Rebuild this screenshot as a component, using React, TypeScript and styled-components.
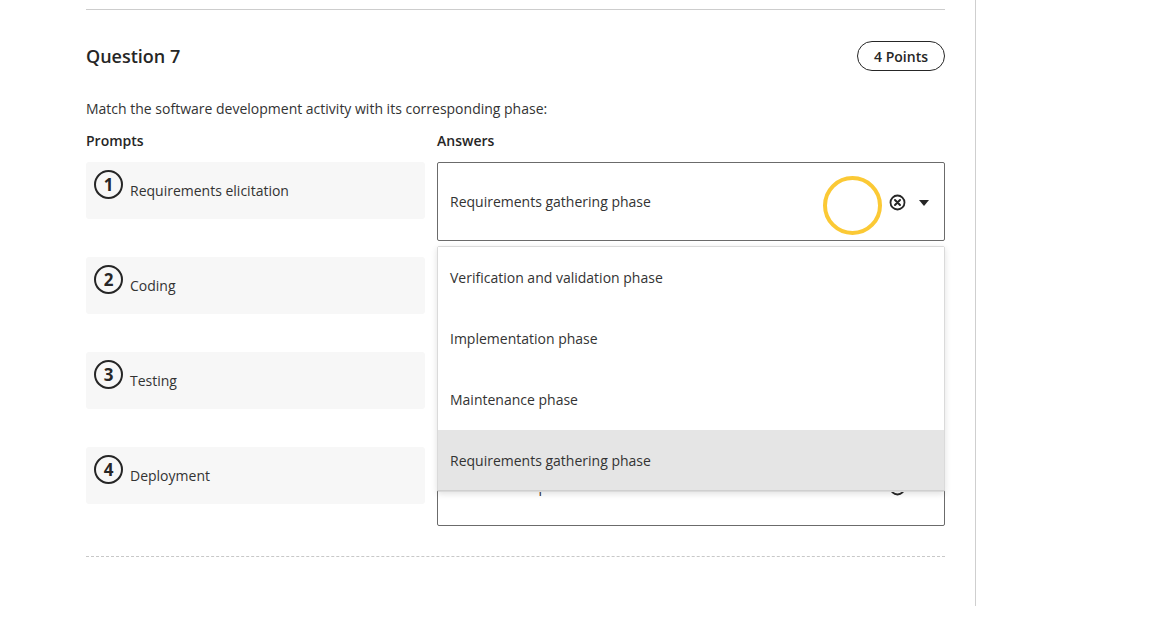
import React from "react";
import styled, { createGlobalStyle } from "styled-components";

const Global = createGlobalStyle`
  html, body { margin: 0; padding: 0; background: #fff; }
  body { font-family: "Open Sans", "Liberation Sans", sans-serif; color: #262626; }
  * { box-sizing: border-box; }
`;

const Page = styled.div`
  display: flex;
  width: 1173px;
  height: 628px;
  overflow: hidden;
`;

const Main = styled.main`
  width: 976px;
  height: 606px;
  border-right: 1px solid #cfcfcf;
  padding: 9px 30px 0 86px;
`;

const Question = styled.section`
  border-top: 1px solid #cdcdcd;
  border-bottom: 1px dashed #c8c8c8;
  padding: 31px 0 30px;
`;

const Header = styled.div`
  display: flex;
  align-items: center;
  justify-content: space-between;
  height: 30px;
`;

const Title = styled.h2`
  margin: 0;
  font-size: 18px;
  font-weight: 600;
  line-height: 24px;
  color: #262626;
`;

const Pill = styled.span`
  display: inline-flex;
  align-items: center;
  justify-content: center;
  height: 30px;
  padding: 0 16px;
  border: 1px solid #262626;
  border-radius: 15px;
  font-size: 14px;
  font-weight: 600;
`;

const Instructions = styled.p`
  margin: 28px 0 0;
  font-size: 14px;
  line-height: 20px;
  color: #333;
`;

const Grid = styled.div`
  display: grid;
  grid-template-columns: 339px 1fr;
  column-gap: 12px;
  row-gap: 16px;
  margin-top: 12px;
`;

const ColHead = styled.div`
  font-size: 14px;
  font-weight: 600;
  line-height: 20px;
  margin-bottom: -5px;
`;

const PromptCard = styled.div`
  display: flex;
  align-items: flex-start;
  height: 57px;
  padding: 8px;
  background: #f7f7f7;
  border-radius: 3px;
`;

const Num = styled.span`
  flex: none;
  display: inline-flex;
  align-items: center;
  justify-content: center;
  width: 29px;
  height: 29px;
  border: 2px solid #262626;
  border-radius: 50%;
  font-size: 17px;
  font-weight: 700;
  line-height: 1;
`;

const PromptText = styled.span`
  margin: 11px 0 0 7px;
  font-size: 14px;
  line-height: 20px;
  color: #333;
`;

const SelectWrap = styled.div`
  position: relative;
`;

const SelectBox = styled.div`
  display: flex;
  align-items: center;
  height: 79px;
  padding: 0 10px 0 12px;
  border: 1px solid #6b6b6b;
  border-radius: 2px;
  background: #fff;
  font-size: 14px;
  color: #333;
`;

const Value = styled.span`
  flex: 1;
  line-height: 20px;
`;

const IconBtn = styled.span<{ $gap?: number }>`
  display: inline-flex;
  align-items: center;
  justify-content: center;
  width: 20px;
  height: 20px;
  margin-left: ${(p) => p.$gap ?? 0}px;
  padding-top: 2px;
`;

const Ring = styled.span`
  position: absolute;
  left: 386px;
  top: 14px;
  width: 59px;
  height: 59px;
  border: 4px solid #fbc935;
  border-radius: 50%;
  pointer-events: none;
`;

const Menu = styled.ul`
  position: absolute;
  z-index: 5;
  left: 0;
  right: 0;
  top: 84px;
  margin: 0;
  padding: 0;
  list-style: none;
  background: #fff;
  border: 1px solid #dadada;
  border-radius: 2px;
  box-shadow: 0 2px 6px rgba(0, 0, 0, 0.12);
`;

const Option = styled.li<{ $active?: boolean }>`
  display: flex;
  align-items: center;
  height: 61px;
  padding: 0 12px;
  font-size: 14px;
  color: #333;
  background: ${(p) => (p.$active ? "#e5e5e5" : "#fff")};
  border-bottom: ${(p) => (p.$active ? "1px solid #cfcfcf" : "none")};
`;

const ClearIcon = () => (
  <svg width="17" height="17" viewBox="0 0 17 17">
    <circle cx="8.5" cy="8.5" r="7" fill="none" stroke="#262626" strokeWidth="1.8" />
    <path d="M6 6 L11 11 M11 6 L6 11" stroke="#262626" strokeWidth="2" strokeLinecap="round" />
  </svg>
);

const Caret = () => (
  <svg width="10" height="6" viewBox="0 0 10 6">
    <path d="M0 0 H10 L5 6 Z" fill="#262626" />
  </svg>
);

const prompts = [
  "Requirements elicitation",
  "Coding",
  "Testing",
  "Deployment",
];

const answers = [
  "Requirements gathering phase",
  "Implementation phase",
  "Verification and validation phase",
  "Maintenance phase",
];

const options = [
  "Verification and validation phase",
  "Implementation phase",
  "Maintenance phase",
  "Requirements gathering phase",
];

export default function App() {
  return (
    <>
      <Global />
      <Page>
        <Main>
          <Question>
            <Header>
              <Title>Question 7</Title>
              <Pill>4 Points</Pill>
            </Header>
            <Instructions>
              Match the software development activity with its corresponding phase:
            </Instructions>
            <Grid>
              <ColHead>Prompts</ColHead>
              <ColHead>Answers</ColHead>
              {prompts.map((p, i) => (
                <React.Fragment key={p}>
                  <PromptCard>
                    <Num>{i + 1}</Num>
                    <PromptText>{p}</PromptText>
                  </PromptCard>
                  <SelectWrap>
                    <SelectBox>
                      <Value>{answers[i]}</Value>
                      <IconBtn>
                        <ClearIcon />
                      </IconBtn>
                      <IconBtn $gap={7}>
                        <Caret />
                      </IconBtn>
                    </SelectBox>
                    {i === 0 && (
                      <>
                        <Ring />
                        <Menu>
                          {options.map((o, j) => (
                            <Option key={o} $active={j === 3}>
                              {o}
                            </Option>
                          ))}
                        </Menu>
                      </>
                    )}
                  </SelectWrap>
                </React.Fragment>
              ))}
            </Grid>
          </Question>
        </Main>
      </Page>
    </>
  );
}
